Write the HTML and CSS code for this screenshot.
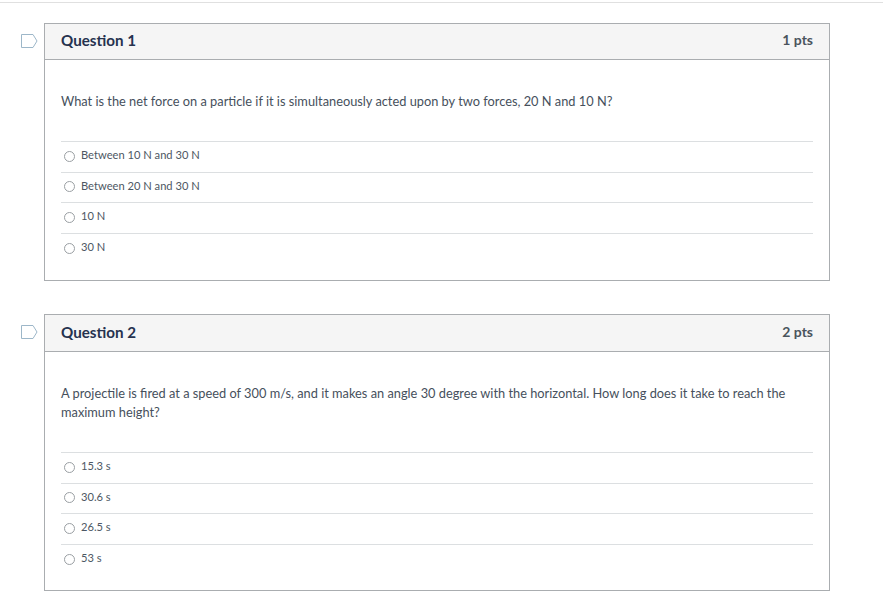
FILE: index.html
```html
<!DOCTYPE html>
<html lang="en">
<head>
<meta charset="utf-8">
<title>Quiz</title>
<link rel="stylesheet" href="styles.css">
</head>
<body>
<div class="topline"></div>
<main class="quiz">
  <section class="row">
    <div class="flag"><svg width="17" height="14" viewBox="0 0 17 14"><path d="M0.5 0.5H12L16 7L12 13.5H0.5Z" fill="#fff" stroke="#9db7c9" stroke-width="1"/></svg></div>
    <div class="card q1">
      <header class="head"><h2>Question 1</h2><span class="pts">1 pts</span></header>
      <div class="body">
        <p class="text">What is the net force on a particle if it is simultaneously acted upon by two forces, 20 N and 10 N?</p>
        <ul class="answers">
          <li><span class="radio"></span>Between 10 N and 30 N</li>
          <li><span class="radio"></span>Between 20 N and 30 N</li>
          <li><span class="radio"></span>10 N</li>
          <li><span class="radio"></span>30 N</li>
        </ul>
      </div>
    </div>
  </section>
  <section class="row">
    <div class="flag"><svg width="17" height="14" viewBox="0 0 17 14"><path d="M0.5 0.5H12L16 7L12 13.5H0.5Z" fill="#fff" stroke="#9db7c9" stroke-width="1"/></svg></div>
    <div class="card q2">
      <header class="head"><h2>Question 2</h2><span class="pts">2 pts</span></header>
      <div class="body">
        <p class="text">A projectile is fired at a speed of 300 m/s, and it makes an angle 30 degree with the horizontal. How long does it take to reach the maximum height?</p>
        <ul class="answers">
          <li><span class="radio"></span>15.3 s</li>
          <li><span class="radio"></span>30.6 s</li>
          <li><span class="radio"></span>26.5 s</li>
          <li><span class="radio"></span>53 s</li>
        </ul>
      </div>
    </div>
  </section>
</main>
</body>
</html>
```
FILE: styles.css
```css
* { box-sizing: border-box; }
html, body { margin: 0; padding: 0; background: #fff; }
body { width: 883px; height: 610px; overflow: hidden; font-family: Lato, "Liberation Sans", sans-serif; color: #2d3b45; }
.topline { height: 1px; margin-top: 2px; background: #e0e0e0; }
.quiz { display: flex; flex-direction: column; gap: 33px; padding: 20px 0 0 21px; }
.row { display: flex; align-items: flex-start; }
.flag { width: 23px; height: 24px; padding-top: 11px; flex: none; display: flex; }
.flag svg { display: block; }
.card { width: 786px; border: 1px solid #aaadb0; background: #fff; }
.q1 { height: 258px; }
.q2 { height: 277px; }
.head { height: 37px; display: flex; justify-content: space-between; align-items: center; padding: 0 16px 2px; background: #f5f5f5; border-bottom: 1px solid #aaadb0; }
.q1 .head { height: 36px; padding-bottom: 3px; }
.head h2 { margin: 0; font-size: 15.2px; font-weight: 700; color: #26324f; }
.pts { margin-bottom: 2px; font-size: 14px; font-weight: 700; color: #4a545c; }
.body { padding: 32px 16px 0; }
.text { margin: 0 0 30px; font-size: 12.8px; line-height: 19px; color: #46505c; }
.answers { list-style: none; margin: 0; padding: 0; }
.answers li { height: 30.6px; display: flex; align-items: center; padding-bottom: 4px; border-top: 1px solid #dcdfe1; font-size: 11.15px; color: #4d5763; }
.radio { width: 11px; height: 11px; margin: 3px 6px 0 3px; border: 1px solid #9a9fa3; border-radius: 50%; flex: none; background: #fff; }
```
